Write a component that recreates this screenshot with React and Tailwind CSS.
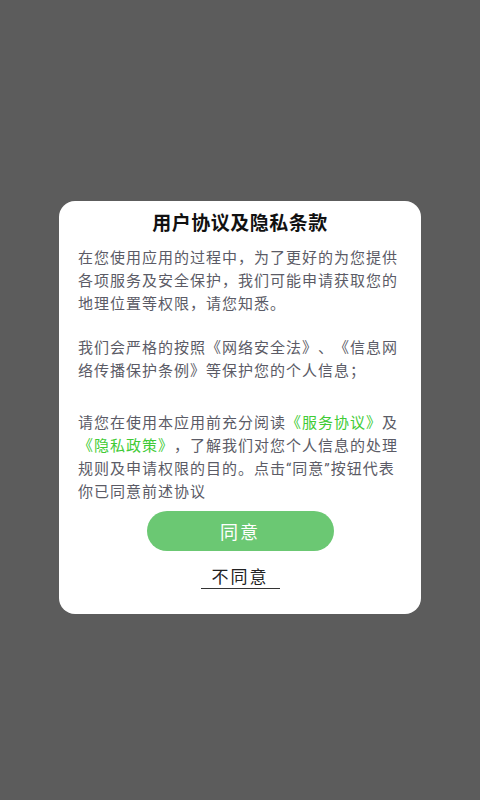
import React from 'react'

const FONT = { fontFamily: '"Noto Sans CJK SC", "Noto Sans", sans-serif' }

// narrow latin quotes, as the reference shows them
const Q = ({ children }) => <span className="font-['Roboto'] leading-none">{children}</span>

// agreement dialog shown on first launch
export default function App() {
  return (
    <div lang="zh-CN" style={FONT} className="min-h-[800px] w-full bg-[#5c5c5c] pt-[201px]">
      <div className="mx-auto flex w-[362px] flex-col items-center rounded-[16px] bg-white pt-[8px] pb-[25px]">
        <h1 className="text-[19px] leading-[26px] font-bold tracking-[0.5px] text-[#111]">用户协议及隐私条款</h1>

        <div className="mt-[10px] w-[324px] text-[15px] leading-[23px] tracking-[1px] text-[#5b5b66] [text-spacing-trim:space-all]">
          <p>在您使用应用的过程中，为了更好的为您提供各项服务及安全保护，我们可能申请获取您的地理位置等权限，请您知悉。</p>
          <p className="mt-[21px]">我们会严格的按照《网络安全法》、《信息网络传播保护条例》等保护您的个人信息；</p>
          <p className="mt-[29px]">
            请您在使用本应用前充分阅读<span className="text-[#3fcb36]">《服务协议》</span>及
            <span className="text-[#3fcb36]">《隐私政策》</span>，了解我们对您个人信息的处理规则及申请权限的目的。点击<Q>“</Q>同意<Q>”</Q>按钮代表你已同意前述协议
          </p>
        </div>

        <button className="mt-[9px] h-[40px] w-[187px] rounded-full bg-[#6bc873] text-[18px] tracking-[2px] text-white">
          同意
        </button>

        <button className="mt-[14px] border-b border-[#333] px-[11px] pb-[1px] text-[17px] leading-[22px] tracking-[2px] text-[#222]">
          不同意
        </button>
      </div>
    </div>
  )
}
